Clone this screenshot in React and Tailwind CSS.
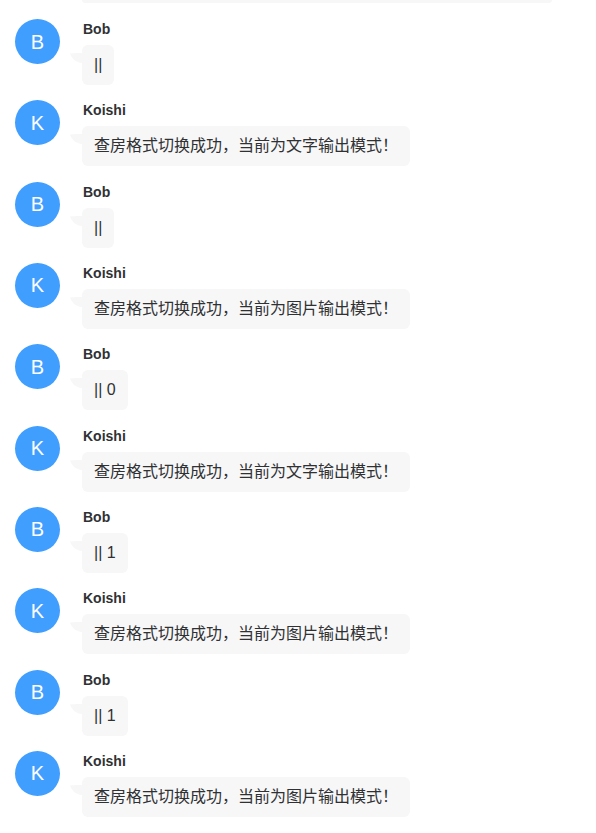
const messages = [
    { user: 'Bob', text: '||' },
    { user: 'Koishi', text: '查房格式切换成功，当前为文字输出模式！' },
    { user: 'Bob', text: '||' },
    { user: 'Koishi', text: '查房格式切换成功，当前为图片输出模式！' },
    { user: 'Bob', text: '|| 0' },
    { user: 'Koishi', text: '查房格式切换成功，当前为文字输出模式！' },
    { user: 'Bob', text: '|| 1' },
    { user: 'Koishi', text: '查房格式切换成功，当前为图片输出模式！' },
    { user: 'Bob', text: '|| 1' },
    { user: 'Koishi', text: '查房格式切换成功，当前为图片输出模式！' },
];

// little tail on the left of each bubble
const Tail = () => (
    <svg className="absolute left-[-12px] top-[8px]" width="12" height="12" viewBox="0 0 12 12">
        <path d="M0 0.5 C4 0.5 8 0 12 -1 L12 10 C6 9.5 2 6 0 0.5 Z" fill="#f7f7f8" />
    </svg>
);

const Message = ({ user, text }) => (
    <div className="flex h-[81.33px]">
        <div className="w-[45px] h-[45px] rounded-full bg-[#409eff] text-white text-[20px] flex items-center justify-center shrink-0">
            {user[0]}
        </div>
        <div className="ml-[22px] flex flex-col items-start">
            <div className="text-[14px] leading-[20px] font-bold text-[#303133] pl-px">{user}</div>
            <div className="relative mt-[6px] bg-[#f7f7f8] rounded-[6px] px-3 py-2 text-[16px] leading-[24px] text-[#303133]">
                <Tail />
                {text}
            </div>
        </div>
    </div>
);

export default function App() {
    return (
        <div
            className="w-[596px] h-[833px] overflow-hidden bg-white pl-[15px]"
            style={{ fontFamily: '"Liberation Sans", "Noto Sans CJK SC", sans-serif' }}
        >
            {/* previous bubble, scrolled mostly out of view */}
            <div className="ml-[67px] w-[470px] h-[3px] bg-[#f7f7f8] rounded-br-[6px] rounded-bl-[6px]" />
            <div className="mt-4">
                {messages.map((m, i) => (
                    <Message key={i} user={m.user} text={m.text} />
                ))}
            </div>
        </div>
    );
}
